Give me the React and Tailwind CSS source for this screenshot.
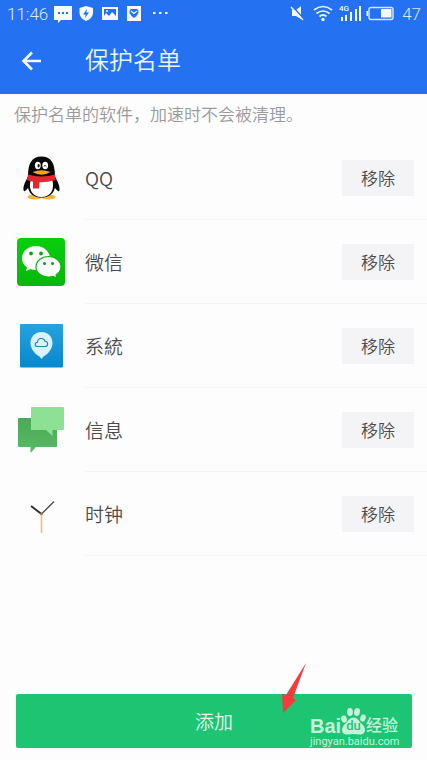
import React from "react";

function QQIcon() {
  return (
    <svg viewBox="0 0 48 48" className="size-12">
      <ellipse cx="17.500" cy="43" rx="7" ry="2.500" fill="#f3b43a" />
      <ellipse cx="31.500" cy="43" rx="7" ry="2.500" fill="#f3b43a" />
      <path d="M11 23C8 28 5.500 33 6.800 37C8 38 10.500 35 12 32L37 32C38.500 35 41 38 42.200 37C43.500 33 41 28 38 23Z" fill="#080808" />
      <path d="M11 22C11 9 15 2.500 24.500 2.500S38 9 38 22C40 34 37 43.500 24.500 43.500S9 34 11 22Z" fill="#080808" />
      <path d="M14 25C10.500 36 16 43 24.500 43S38.500 36 35 25Z" fill="#fff" />
      <ellipse cx="20.800" cy="11.500" rx="2.900" ry="3.700" fill="#fff" />
      <ellipse cx="28.200" cy="11.500" rx="2.900" ry="3.700" fill="#fff" />
      <ellipse cx="21.600" cy="11.800" rx="1.100" ry="1.700" fill="#111" />
      <path d="M27 12.500Q28 10 29.200 12.500" fill="none" stroke="#111" strokeWidth="1" />
      <path d="M15.500 18Q24.500 14.500 33.500 18Q24.500 23.500 15.500 18Z" fill="#f7a521" />
      <path d="M11 20.500Q24.500 24.500 38 20.500L38.500 26Q30 28.500 22.500 28.300L22 34.500H16V27.800Q12.500 27 10 26Z" fill="#e8252f" />
    </svg>
  );
}

function WeChatIcon() {
  return (
    <svg viewBox="0 0 48 48" className="size-12">
      <defs>
        <linearGradient id="wechat" x1="0" y1="0" x2="0" y2="1">
          <stop offset="0" stopColor="#08cf0c" />
          <stop offset="1" stopColor="#06b80a" />
        </linearGradient>
      </defs>
      <rect width="48" height="48" rx="4" fill="url(#wechat)" />
      <path d="M19 8C11 8 5 13.500 5 20.200C5 24 7 27.300 10 29.500L9 33L13.500 31Q16 32 19 32C27 32 33 26.500 33 20.200S27 8 19 8Z" fill="#fff" />
      <path d="M31.500 18.500C24.500 18.500 19 23 19 29S24.500 39 31.500 39Q34 39 36 38.500L40 40L39 37C42 35 44 32.500 44 29C44 23 38.500 18.500 31.500 18.500Z" fill="#fff" stroke="#08b90c" strokeWidth="1.200" />
      <circle cx="14" cy="15.500" r="1.900" fill="#169c22" />
      <circle cx="24" cy="15.500" r="1.900" fill="#169c22" />
      <circle cx="27.500" cy="25.500" r="1.600" fill="#169c22" />
      <circle cx="35.500" cy="25.500" r="1.600" fill="#169c22" />
    </svg>
  );
}

function SystemIcon() {
  return (
    <svg viewBox="0 0 48 48" className="size-12">
      <defs>
        <linearGradient id="system" x1="0" y1="0" x2="0" y2="1">
          <stop offset="0" stopColor="#26a3df" />
          <stop offset="1" stopColor="#0788cd" />
        </linearGradient>
      </defs>
      <rect x="3" y="2" width="43" height="43.500" rx="1" fill="url(#system)" />
      <path d="M24.500 10C17.500 10 13.500 15 13.500 21C13.500 27 18 32 22.500 34.500L24.500 37L26.500 34.500C31 32 35.500 27 35.500 21C35.500 15 31.500 10 24.500 10Z" fill="#d9f2fb" />
      <path d="M21 24.500C17.200 24.500 17.500 20.500 20.500 20.200C20.700 15.500 27 15.500 28 19.300C31.500 19.500 31.500 24.500 28 24.500Z" fill="none" stroke="#287fa5" strokeWidth="1.100" />
    </svg>
  );
}

function MessagesIcon() {
  return (
    <svg viewBox="0 0 48 48" className="size-12">
      <defs>
        <linearGradient id="messages" x1="0" y1="0" x2="0" y2="1">
          <stop offset="0" stopColor="#4aa954" />
          <stop offset="1" stopColor="#5cba66" />
        </linearGradient>
      </defs>
      <path d="M2 12H40V41H19L13.500 47V41H2Q1 41 1 40V13Q1 12 2 12Z" fill="url(#messages)" />
      <path d="M15 1H46Q47 1 47 2V23Q47 24 46 24H35.500V30L29 24H14V2Q14 1 15 1Z" fill="#8ce195" />
    </svg>
  );
}

function ClockIcon() {
  return (
    <svg viewBox="0 0 48 48" className="size-12">
      <path d="M24.500 24L37 11.500" stroke="#4a4542" strokeWidth="1.300" />
      <path d="M14 16L24.500 24" stroke="#302c2a" strokeWidth="1.900" />
      <path d="M24.500 23V43" stroke="#f3b578" strokeWidth="1.500" />
      <circle cx="24.500" cy="24" r="1.200" fill="#a4713f" />
    </svg>
  );
}

const apps = [
  { name: "QQ", Icon: QQIcon },
  { name: "微信", Icon: WeChatIcon },
  { name: "系統", Icon: SystemIcon },
  { name: "信息", Icon: MessagesIcon },
  { name: "时钟", Icon: ClockIcon },
];

function StatusBar() {
  return (
    <div className="flex h-7 items-center justify-between pr-1.5 pl-[7px] text-[17px] leading-7 font-light text-[#dcecff]">
      <div className="flex items-center">
        <span className="w-[47px]">11:46</span>
        <svg viewBox="0 0 116 20" className="h-5 w-[116px]" fill="#f4faff">
          <path d="M0 2H18V16H7L4 19V16H0Z" />
          <path d="M4 8H6V10H4ZM8 8H10V10H8ZM12 8H14V10H12Z" fill="#2471f1" />
          <path d="M32 2L39 4V9Q39 14 32 17Q25.500 14 25.500 9V4Z" />
          <path d="M33 5L29 10.500H31.700L31 14L35 8.500H32.300Z" fill="#2471f1" />
          <path d="M48 3H64V16H48Z" />
          <path d="M50 5H62V12L58 8L55 12L52 9L50 12Z" fill="#2471f1" />
          <circle cx="53" cy="7" r="1" />
          <path d="M73 2H87V17H73Z" />
          <path d="M77 5H83Q85 6 84.500 9Q83 12 80 14Q77 12 75.500 9Q75 6 77 5Z" fill="#2471f1" />
          <path d="M77 7L80 9.500L83 7" fill="none" stroke="#f4faff" strokeWidth="1.200" />
          <path d="M99 8H101.500V10H99ZM105 8H107.500V10H105ZM111 8H113.500V10H111Z" />
        </svg>
      </div>
      <div className="flex items-center">
        <svg viewBox="0 0 106 20" className="h-5 w-[106px]" fill="#f4faff">
          <path d="M2 6H6L11 2V15L6 12H2Z" />
          <path d="M2 2L14 15" stroke="#2471f1" strokeWidth="1.500" />
          <path d="M1 3L13 16" stroke="#f4faff" strokeWidth="1.300" />
          <g fill="none" stroke="#e8f6ff" strokeWidth="1.700">
            <path d="M24 6Q33 -1 42 6" />
            <path d="M26.500 9.500Q33 4.500 39.500 9.500" />
            <path d="M29.500 12.500Q33 9.500 36.500 12.500" />
          </g>
          <circle cx="33" cy="15.500" r="1.700" />
          <text x="49" y="7" fontSize="8" fontWeight="500">4G</text>
          <path d="M51 13H53V17H51ZM55 11H57V17H55ZM60 8H62V17H60ZM65 5H67V17H65ZM69 2H71V17H69Z" />
          <rect x="79" y="3.500" width="24" height="12" rx="2" fill="none" stroke="#c9eaff" strokeWidth="1.500" />
          <path d="M76.500 7H78V12H76.500ZM91 5H101.500V13.500H91Z" />
        </svg>
        <span className="pl-1.5">47</span>
      </div>
    </div>
  );
}

function Watermark() {
  return (
    <div className="pointer-events-none absolute right-[27px] bottom-3 w-[90px] text-[#c6f2dc]">
      <div className="flex h-[29px] items-end">
        <span className="w-[31px] font-[Arial,'Liberation_Sans',sans-serif] text-[20px] leading-5 font-bold">Bai</span>
        <div className="relative h-[29px] w-[25px]">
          <svg viewBox="0 0 25 29" className="h-[29px] w-[25px]" fill="#c6f2dc">
            <ellipse cx="3" cy="12" rx="2.800" ry="3.700" transform="rotate(-15 3 12)" />
            <ellipse cx="9" cy="5" rx="2.900" ry="4" />
            <ellipse cx="16" cy="5" rx="2.900" ry="4" transform="rotate(10 16 5)" />
            <ellipse cx="22" cy="11" rx="2.700" ry="3.700" transform="rotate(15 22 11)" />
            <path d="M12.500 10.500C8 10.500 7 14.500 3.500 17.500C-1 22 1 28.500 7 27.500Q12.500 26.500 18 27.500C24 28.500 26 22 21.500 17.500C18 14.500 17 10.500 12.500 10.500Z" />
          </svg>
          <span className="absolute inset-x-0 bottom-1 text-center text-[13px] leading-3 font-medium text-[#1dc573]">du</span>
        </div>
        <span className="text-[16px] leading-5 font-medium">经验</span>
      </div>
      <div className="text-[11px] leading-3 font-normal whitespace-nowrap">jingyan.baidu.com</div>
    </div>
  );
}

export default function App() {
  return (
    <div className="flex min-h-screen flex-col bg-[#fdfdfd] font-[Roboto,'Noto_Sans_CJK_SC',sans-serif] text-[#4c4c4e]">
      <header className="bg-[#2471f1]">
        <StatusBar />
        <div className="flex h-[66px] items-center pl-[21px]">
          <button aria-label="返回" className="w-16">
            <svg viewBox="0 0 22 22" className="size-[22px]" fill="none" stroke="#f4faff" strokeWidth="2.600">
              <path d="M20 11H3M11 2.500L2.500 11L11 19.500" />
            </svg>
          </button>
          <h1 className="text-[24px] leading-8 font-[350] text-[#e8f4ff]">保护名单</h1>
        </div>
      </header>
      <main className="pb-6">
        <p className="px-3.5 py-2 text-[17px] leading-[26px] font-[350] text-[#9a9a9c]">保护名单的软件，加速时不会被清理。</p>
        <ul>
          {apps.map(({ name, Icon }) => (
            <li key={name} className="flex h-[84px] items-center gap-5 pl-[17px]">
              <Icon />
              <div className="flex h-full flex-1 items-center justify-between border-b border-[#f3f2f4] pr-[13px]">
                <span className="font-['Noto_Sans_CJK_SC',sans-serif] text-[19px] leading-[26px] font-[350]">{name}</span>
                <button aria-label={`移除 ${name}`} className="h-9 w-[72px] bg-[#f4f3f6] font-['Noto_Sans_CJK_SC',sans-serif] text-[17px] leading-6 font-[350]">移除</button>
              </div>
            </li>
          ))}
        </ul>
      </main>
      <footer className="relative mt-auto pr-[15px] pb-3 pl-4">
        <button className="h-[54px] w-full rounded-xs bg-[#1dc573] font-['Noto_Sans_CJK_SC',sans-serif] text-[19px] leading-6 font-[350] text-[#e2faee]">添加</button>
        <svg viewBox="0 0 26 52" className="pointer-events-none absolute right-[120px] bottom-[46px] h-[52px] w-[26px]">
          <path d="M25 1L12 36L15 38L2 51L1 32L5 33Z" fill="#f43b3d" />
        </svg>
        <Watermark />
      </footer>
    </div>
  );
}
